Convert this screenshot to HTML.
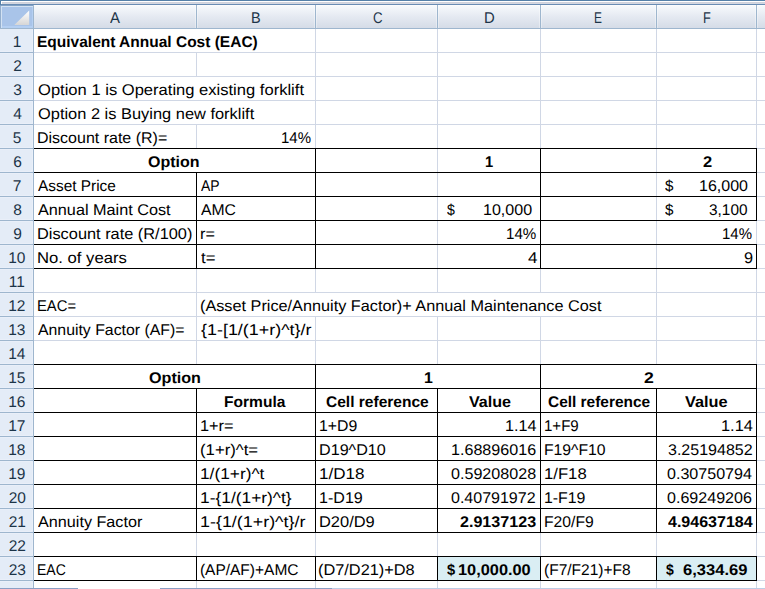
<!DOCTYPE html>
<html><head><meta charset="utf-8"><style>
html,body{margin:0;padding:0;}
body{width:765px;height:589px;position:relative;overflow:hidden;background:#fff;}
body>div{position:absolute;}
.t{font-family:"Liberation Sans",sans-serif;font-size:15.5px;line-height:30px;height:30px;white-space:nowrap;transform-origin:0 19px;text-rendering:geometricPrecision;}
.b{font-weight:700;}
</style></head><body>
<div style="left:0px;top:0px;width:765px;height:1px;background:#5480a8;"></div>
<div style="left:0px;top:1px;width:765px;height:1px;background:#ffffff;"></div>
<div style="left:0px;top:2px;width:765px;height:1px;background:#d0d2dc;"></div>
<div style="left:0px;top:3px;width:765px;height:1px;background:#d3d7e1;"></div>
<div style="left:0px;top:4px;width:765px;height:1px;background:#6a8db4;"></div>
<div style="left:34px;top:5px;width:731px;height:23px;background:linear-gradient(#ffffff 0px,#f6f9fc 1px,#e4e9f1 12px,#d5dce7 23px);"></div>
<div style="left:0px;top:28px;width:765px;height:1px;background:#9eb6ce;"></div>
<div style="left:195px;top:6px;width:1px;height:22px;background:rgba(255,255,255,0.35);"></div>
<div style="left:197px;top:6px;width:1px;height:22px;background:rgba(255,255,255,0.35);"></div>
<div style="left:196px;top:5px;width:1px;height:23px;background:#9eb6ce;"></div>
<div style="left:314px;top:6px;width:1px;height:22px;background:rgba(255,255,255,0.35);"></div>
<div style="left:316px;top:6px;width:1px;height:22px;background:rgba(255,255,255,0.35);"></div>
<div style="left:315px;top:5px;width:1px;height:23px;background:#9eb6ce;"></div>
<div style="left:436px;top:6px;width:1px;height:22px;background:rgba(255,255,255,0.35);"></div>
<div style="left:438px;top:6px;width:1px;height:22px;background:rgba(255,255,255,0.35);"></div>
<div style="left:437px;top:5px;width:1px;height:23px;background:#9eb6ce;"></div>
<div style="left:539px;top:6px;width:1px;height:22px;background:rgba(255,255,255,0.35);"></div>
<div style="left:541px;top:6px;width:1px;height:22px;background:rgba(255,255,255,0.35);"></div>
<div style="left:540px;top:5px;width:1px;height:23px;background:#9eb6ce;"></div>
<div style="left:655px;top:6px;width:1px;height:22px;background:rgba(255,255,255,0.35);"></div>
<div style="left:657px;top:6px;width:1px;height:22px;background:rgba(255,255,255,0.35);"></div>
<div style="left:656px;top:5px;width:1px;height:23px;background:#9eb6ce;"></div>
<div style="left:755px;top:6px;width:1px;height:22px;background:rgba(255,255,255,0.35);"></div>
<div style="left:757px;top:6px;width:1px;height:22px;background:rgba(255,255,255,0.35);"></div>
<div style="left:756px;top:5px;width:1px;height:23px;background:#9eb6ce;"></div>
<div style="left:33px;top:5px;width:1px;height:24px;background:#9eb6ce;"></div>
<div style="left:0px;top:0px;width:1px;height:5px;background:#5480a8;"></div>
<div style="left:1px;top:2px;width:1px;height:2px;background:#ffffff;"></div>
<div style="left:0px;top:5px;width:33px;height:23px;background:#94afce;"></div>
<div style="left:0px;top:5px;width:33px;height:1px;background:#7fa0c4;"></div>
<div style="left:1px;top:6px;width:32px;height:22px;background:#d3e2f3;"></div>
<div style="left:2px;top:7px;width:30px;height:19px;background:#a9c4e9;"></div>
<div style="left:32px;top:7px;width:1px;height:21px;background:#b4cff2;"></div>
<div style="left:2px;top:26px;width:31px;height:2px;background:#b4cff2;"></div>
<svg style="position:absolute;left:0;top:0" width="34" height="29"><defs><linearGradient id="tg" x1="0" y1="0" x2="0" y2="1"><stop offset="0" stop-color="#ffffff"/><stop offset="1" stop-color="#d6d6d6"/></linearGradient></defs><polygon points="14.3,25 29.2,25 29.2,10.5" fill="url(#tg)"/></svg>
<div style="left:0px;top:29px;width:33px;height:560px;background:#e4ecf7;"></div>
<div style="left:32px;top:29px;width:1px;height:560px;background:#eaf0f9;"></div>
<div style="left:33px;top:29px;width:1px;height:560px;background:#9eb6ce;"></div>
<div style="left:0px;top:51px;width:33px;height:1px;background:#e9eff9;"></div>
<div style="left:0px;top:52px;width:33px;height:1px;background:#9eb6ce;"></div>
<div style="left:0px;top:53px;width:33px;height:1px;background:#e9eff9;"></div>
<div style="left:0px;top:75px;width:33px;height:1px;background:#e9eff9;"></div>
<div style="left:0px;top:76px;width:33px;height:1px;background:#9eb6ce;"></div>
<div style="left:0px;top:77px;width:33px;height:1px;background:#e9eff9;"></div>
<div style="left:0px;top:99px;width:33px;height:1px;background:#e9eff9;"></div>
<div style="left:0px;top:100px;width:33px;height:1px;background:#9eb6ce;"></div>
<div style="left:0px;top:101px;width:33px;height:1px;background:#e9eff9;"></div>
<div style="left:0px;top:123px;width:33px;height:1px;background:#e9eff9;"></div>
<div style="left:0px;top:124px;width:33px;height:1px;background:#9eb6ce;"></div>
<div style="left:0px;top:125px;width:33px;height:1px;background:#e9eff9;"></div>
<div style="left:0px;top:147px;width:33px;height:1px;background:#e9eff9;"></div>
<div style="left:0px;top:148px;width:33px;height:1px;background:#9eb6ce;"></div>
<div style="left:0px;top:149px;width:33px;height:1px;background:#e9eff9;"></div>
<div style="left:0px;top:171px;width:33px;height:1px;background:#e9eff9;"></div>
<div style="left:0px;top:172px;width:33px;height:1px;background:#9eb6ce;"></div>
<div style="left:0px;top:173px;width:33px;height:1px;background:#e9eff9;"></div>
<div style="left:0px;top:195px;width:33px;height:1px;background:#e9eff9;"></div>
<div style="left:0px;top:196px;width:33px;height:1px;background:#9eb6ce;"></div>
<div style="left:0px;top:197px;width:33px;height:1px;background:#e9eff9;"></div>
<div style="left:0px;top:219px;width:33px;height:1px;background:#e9eff9;"></div>
<div style="left:0px;top:220px;width:33px;height:1px;background:#9eb6ce;"></div>
<div style="left:0px;top:221px;width:33px;height:1px;background:#e9eff9;"></div>
<div style="left:0px;top:243px;width:33px;height:1px;background:#e9eff9;"></div>
<div style="left:0px;top:244px;width:33px;height:1px;background:#9eb6ce;"></div>
<div style="left:0px;top:245px;width:33px;height:1px;background:#e9eff9;"></div>
<div style="left:0px;top:267px;width:33px;height:1px;background:#e9eff9;"></div>
<div style="left:0px;top:268px;width:33px;height:1px;background:#9eb6ce;"></div>
<div style="left:0px;top:269px;width:33px;height:1px;background:#e9eff9;"></div>
<div style="left:0px;top:291px;width:33px;height:1px;background:#e9eff9;"></div>
<div style="left:0px;top:292px;width:33px;height:1px;background:#9eb6ce;"></div>
<div style="left:0px;top:293px;width:33px;height:1px;background:#e9eff9;"></div>
<div style="left:0px;top:315px;width:33px;height:1px;background:#e9eff9;"></div>
<div style="left:0px;top:316px;width:33px;height:1px;background:#9eb6ce;"></div>
<div style="left:0px;top:317px;width:33px;height:1px;background:#e9eff9;"></div>
<div style="left:0px;top:339px;width:33px;height:1px;background:#e9eff9;"></div>
<div style="left:0px;top:340px;width:33px;height:1px;background:#9eb6ce;"></div>
<div style="left:0px;top:341px;width:33px;height:1px;background:#e9eff9;"></div>
<div style="left:0px;top:363px;width:33px;height:1px;background:#e9eff9;"></div>
<div style="left:0px;top:364px;width:33px;height:1px;background:#9eb6ce;"></div>
<div style="left:0px;top:365px;width:33px;height:1px;background:#e9eff9;"></div>
<div style="left:0px;top:387px;width:33px;height:1px;background:#e9eff9;"></div>
<div style="left:0px;top:388px;width:33px;height:1px;background:#9eb6ce;"></div>
<div style="left:0px;top:389px;width:33px;height:1px;background:#e9eff9;"></div>
<div style="left:0px;top:411px;width:33px;height:1px;background:#e9eff9;"></div>
<div style="left:0px;top:412px;width:33px;height:1px;background:#9eb6ce;"></div>
<div style="left:0px;top:413px;width:33px;height:1px;background:#e9eff9;"></div>
<div style="left:0px;top:435px;width:33px;height:1px;background:#e9eff9;"></div>
<div style="left:0px;top:436px;width:33px;height:1px;background:#9eb6ce;"></div>
<div style="left:0px;top:437px;width:33px;height:1px;background:#e9eff9;"></div>
<div style="left:0px;top:459px;width:33px;height:1px;background:#e9eff9;"></div>
<div style="left:0px;top:460px;width:33px;height:1px;background:#9eb6ce;"></div>
<div style="left:0px;top:461px;width:33px;height:1px;background:#e9eff9;"></div>
<div style="left:0px;top:483px;width:33px;height:1px;background:#e9eff9;"></div>
<div style="left:0px;top:484px;width:33px;height:1px;background:#9eb6ce;"></div>
<div style="left:0px;top:485px;width:33px;height:1px;background:#e9eff9;"></div>
<div style="left:0px;top:507px;width:33px;height:1px;background:#e9eff9;"></div>
<div style="left:0px;top:508px;width:33px;height:1px;background:#9eb6ce;"></div>
<div style="left:0px;top:509px;width:33px;height:1px;background:#e9eff9;"></div>
<div style="left:0px;top:531px;width:33px;height:1px;background:#e9eff9;"></div>
<div style="left:0px;top:532px;width:33px;height:1px;background:#9eb6ce;"></div>
<div style="left:0px;top:533px;width:33px;height:1px;background:#e9eff9;"></div>
<div style="left:0px;top:555px;width:33px;height:1px;background:#e9eff9;"></div>
<div style="left:0px;top:556px;width:33px;height:1px;background:#9eb6ce;"></div>
<div style="left:0px;top:557px;width:33px;height:1px;background:#e9eff9;"></div>
<div style="left:0px;top:579px;width:33px;height:1px;background:#e9eff9;"></div>
<div style="left:0px;top:580px;width:33px;height:1px;background:#9eb6ce;"></div>
<div style="left:0px;top:581px;width:33px;height:1px;background:#e9eff9;"></div>
<div style="left:34px;top:52px;width:731px;height:1px;background:#d0d7e5;"></div>
<div style="left:34px;top:76px;width:731px;height:1px;background:#d0d7e5;"></div>
<div style="left:34px;top:100px;width:731px;height:1px;background:#d0d7e5;"></div>
<div style="left:34px;top:124px;width:731px;height:1px;background:#d0d7e5;"></div>
<div style="left:34px;top:148px;width:731px;height:1px;background:#d0d7e5;"></div>
<div style="left:34px;top:172px;width:731px;height:1px;background:#d0d7e5;"></div>
<div style="left:34px;top:196px;width:731px;height:1px;background:#d0d7e5;"></div>
<div style="left:34px;top:220px;width:731px;height:1px;background:#d0d7e5;"></div>
<div style="left:34px;top:244px;width:731px;height:1px;background:#d0d7e5;"></div>
<div style="left:34px;top:268px;width:731px;height:1px;background:#d0d7e5;"></div>
<div style="left:34px;top:292px;width:731px;height:1px;background:#d0d7e5;"></div>
<div style="left:34px;top:316px;width:731px;height:1px;background:#d0d7e5;"></div>
<div style="left:34px;top:340px;width:731px;height:1px;background:#d0d7e5;"></div>
<div style="left:34px;top:364px;width:731px;height:1px;background:#d0d7e5;"></div>
<div style="left:34px;top:388px;width:731px;height:1px;background:#d0d7e5;"></div>
<div style="left:34px;top:412px;width:731px;height:1px;background:#d0d7e5;"></div>
<div style="left:34px;top:436px;width:731px;height:1px;background:#d0d7e5;"></div>
<div style="left:34px;top:460px;width:731px;height:1px;background:#d0d7e5;"></div>
<div style="left:34px;top:484px;width:731px;height:1px;background:#d0d7e5;"></div>
<div style="left:34px;top:508px;width:731px;height:1px;background:#d0d7e5;"></div>
<div style="left:34px;top:532px;width:731px;height:1px;background:#d0d7e5;"></div>
<div style="left:34px;top:556px;width:731px;height:1px;background:#d0d7e5;"></div>
<div style="left:34px;top:580px;width:731px;height:1px;background:#d0d7e5;"></div>
<div style="left:196px;top:53px;width:1px;height:23px;background:#d0d7e5;"></div>
<div style="left:196px;top:125px;width:1px;height:23px;background:#d0d7e5;"></div>
<div style="left:196px;top:173px;width:1px;height:23px;background:#d0d7e5;"></div>
<div style="left:196px;top:197px;width:1px;height:23px;background:#d0d7e5;"></div>
<div style="left:196px;top:221px;width:1px;height:23px;background:#d0d7e5;"></div>
<div style="left:196px;top:245px;width:1px;height:23px;background:#d0d7e5;"></div>
<div style="left:196px;top:269px;width:1px;height:23px;background:#d0d7e5;"></div>
<div style="left:196px;top:293px;width:1px;height:23px;background:#d0d7e5;"></div>
<div style="left:196px;top:317px;width:1px;height:23px;background:#d0d7e5;"></div>
<div style="left:196px;top:341px;width:1px;height:23px;background:#d0d7e5;"></div>
<div style="left:196px;top:389px;width:1px;height:23px;background:#d0d7e5;"></div>
<div style="left:196px;top:413px;width:1px;height:23px;background:#d0d7e5;"></div>
<div style="left:196px;top:437px;width:1px;height:23px;background:#d0d7e5;"></div>
<div style="left:196px;top:461px;width:1px;height:23px;background:#d0d7e5;"></div>
<div style="left:196px;top:485px;width:1px;height:23px;background:#d0d7e5;"></div>
<div style="left:196px;top:509px;width:1px;height:23px;background:#d0d7e5;"></div>
<div style="left:196px;top:533px;width:1px;height:23px;background:#d0d7e5;"></div>
<div style="left:196px;top:557px;width:1px;height:23px;background:#d0d7e5;"></div>
<div style="left:196px;top:581px;width:1px;height:23px;background:#d0d7e5;"></div>
<div style="left:315px;top:29px;width:1px;height:23px;background:#d0d7e5;"></div>
<div style="left:315px;top:53px;width:1px;height:23px;background:#d0d7e5;"></div>
<div style="left:315px;top:77px;width:1px;height:23px;background:#d0d7e5;"></div>
<div style="left:315px;top:101px;width:1px;height:23px;background:#d0d7e5;"></div>
<div style="left:315px;top:125px;width:1px;height:23px;background:#d0d7e5;"></div>
<div style="left:315px;top:149px;width:1px;height:23px;background:#d0d7e5;"></div>
<div style="left:315px;top:173px;width:1px;height:23px;background:#d0d7e5;"></div>
<div style="left:315px;top:197px;width:1px;height:23px;background:#d0d7e5;"></div>
<div style="left:315px;top:221px;width:1px;height:23px;background:#d0d7e5;"></div>
<div style="left:315px;top:245px;width:1px;height:23px;background:#d0d7e5;"></div>
<div style="left:315px;top:269px;width:1px;height:23px;background:#d0d7e5;"></div>
<div style="left:315px;top:317px;width:1px;height:23px;background:#d0d7e5;"></div>
<div style="left:315px;top:341px;width:1px;height:23px;background:#d0d7e5;"></div>
<div style="left:315px;top:365px;width:1px;height:23px;background:#d0d7e5;"></div>
<div style="left:315px;top:389px;width:1px;height:23px;background:#d0d7e5;"></div>
<div style="left:315px;top:413px;width:1px;height:23px;background:#d0d7e5;"></div>
<div style="left:315px;top:437px;width:1px;height:23px;background:#d0d7e5;"></div>
<div style="left:315px;top:461px;width:1px;height:23px;background:#d0d7e5;"></div>
<div style="left:315px;top:485px;width:1px;height:23px;background:#d0d7e5;"></div>
<div style="left:315px;top:509px;width:1px;height:23px;background:#d0d7e5;"></div>
<div style="left:315px;top:533px;width:1px;height:23px;background:#d0d7e5;"></div>
<div style="left:315px;top:557px;width:1px;height:23px;background:#d0d7e5;"></div>
<div style="left:315px;top:581px;width:1px;height:23px;background:#d0d7e5;"></div>
<div style="left:437px;top:29px;width:1px;height:23px;background:#d0d7e5;"></div>
<div style="left:437px;top:53px;width:1px;height:23px;background:#d0d7e5;"></div>
<div style="left:437px;top:77px;width:1px;height:23px;background:#d0d7e5;"></div>
<div style="left:437px;top:101px;width:1px;height:23px;background:#d0d7e5;"></div>
<div style="left:437px;top:125px;width:1px;height:23px;background:#d0d7e5;"></div>
<div style="left:437px;top:149px;width:1px;height:23px;background:#d0d7e5;"></div>
<div style="left:437px;top:173px;width:1px;height:23px;background:#d0d7e5;"></div>
<div style="left:437px;top:197px;width:1px;height:23px;background:#d0d7e5;"></div>
<div style="left:437px;top:221px;width:1px;height:23px;background:#d0d7e5;"></div>
<div style="left:437px;top:245px;width:1px;height:23px;background:#d0d7e5;"></div>
<div style="left:437px;top:269px;width:1px;height:23px;background:#d0d7e5;"></div>
<div style="left:437px;top:317px;width:1px;height:23px;background:#d0d7e5;"></div>
<div style="left:437px;top:341px;width:1px;height:23px;background:#d0d7e5;"></div>
<div style="left:437px;top:389px;width:1px;height:23px;background:#d0d7e5;"></div>
<div style="left:437px;top:413px;width:1px;height:23px;background:#d0d7e5;"></div>
<div style="left:437px;top:437px;width:1px;height:23px;background:#d0d7e5;"></div>
<div style="left:437px;top:461px;width:1px;height:23px;background:#d0d7e5;"></div>
<div style="left:437px;top:485px;width:1px;height:23px;background:#d0d7e5;"></div>
<div style="left:437px;top:509px;width:1px;height:23px;background:#d0d7e5;"></div>
<div style="left:437px;top:533px;width:1px;height:23px;background:#d0d7e5;"></div>
<div style="left:437px;top:557px;width:1px;height:23px;background:#d0d7e5;"></div>
<div style="left:437px;top:581px;width:1px;height:23px;background:#d0d7e5;"></div>
<div style="left:540px;top:29px;width:1px;height:23px;background:#d0d7e5;"></div>
<div style="left:540px;top:53px;width:1px;height:23px;background:#d0d7e5;"></div>
<div style="left:540px;top:77px;width:1px;height:23px;background:#d0d7e5;"></div>
<div style="left:540px;top:101px;width:1px;height:23px;background:#d0d7e5;"></div>
<div style="left:540px;top:125px;width:1px;height:23px;background:#d0d7e5;"></div>
<div style="left:540px;top:149px;width:1px;height:23px;background:#d0d7e5;"></div>
<div style="left:540px;top:173px;width:1px;height:23px;background:#d0d7e5;"></div>
<div style="left:540px;top:197px;width:1px;height:23px;background:#d0d7e5;"></div>
<div style="left:540px;top:221px;width:1px;height:23px;background:#d0d7e5;"></div>
<div style="left:540px;top:245px;width:1px;height:23px;background:#d0d7e5;"></div>
<div style="left:540px;top:269px;width:1px;height:23px;background:#d0d7e5;"></div>
<div style="left:540px;top:317px;width:1px;height:23px;background:#d0d7e5;"></div>
<div style="left:540px;top:341px;width:1px;height:23px;background:#d0d7e5;"></div>
<div style="left:540px;top:365px;width:1px;height:23px;background:#d0d7e5;"></div>
<div style="left:540px;top:389px;width:1px;height:23px;background:#d0d7e5;"></div>
<div style="left:540px;top:413px;width:1px;height:23px;background:#d0d7e5;"></div>
<div style="left:540px;top:437px;width:1px;height:23px;background:#d0d7e5;"></div>
<div style="left:540px;top:461px;width:1px;height:23px;background:#d0d7e5;"></div>
<div style="left:540px;top:485px;width:1px;height:23px;background:#d0d7e5;"></div>
<div style="left:540px;top:509px;width:1px;height:23px;background:#d0d7e5;"></div>
<div style="left:540px;top:533px;width:1px;height:23px;background:#d0d7e5;"></div>
<div style="left:540px;top:557px;width:1px;height:23px;background:#d0d7e5;"></div>
<div style="left:540px;top:581px;width:1px;height:23px;background:#d0d7e5;"></div>
<div style="left:656px;top:29px;width:1px;height:23px;background:#d0d7e5;"></div>
<div style="left:656px;top:53px;width:1px;height:23px;background:#d0d7e5;"></div>
<div style="left:656px;top:77px;width:1px;height:23px;background:#d0d7e5;"></div>
<div style="left:656px;top:101px;width:1px;height:23px;background:#d0d7e5;"></div>
<div style="left:656px;top:125px;width:1px;height:23px;background:#d0d7e5;"></div>
<div style="left:656px;top:149px;width:1px;height:23px;background:#d0d7e5;"></div>
<div style="left:656px;top:173px;width:1px;height:23px;background:#d0d7e5;"></div>
<div style="left:656px;top:197px;width:1px;height:23px;background:#d0d7e5;"></div>
<div style="left:656px;top:221px;width:1px;height:23px;background:#d0d7e5;"></div>
<div style="left:656px;top:245px;width:1px;height:23px;background:#d0d7e5;"></div>
<div style="left:656px;top:269px;width:1px;height:23px;background:#d0d7e5;"></div>
<div style="left:656px;top:293px;width:1px;height:23px;background:#d0d7e5;"></div>
<div style="left:656px;top:317px;width:1px;height:23px;background:#d0d7e5;"></div>
<div style="left:656px;top:341px;width:1px;height:23px;background:#d0d7e5;"></div>
<div style="left:656px;top:389px;width:1px;height:23px;background:#d0d7e5;"></div>
<div style="left:656px;top:413px;width:1px;height:23px;background:#d0d7e5;"></div>
<div style="left:656px;top:437px;width:1px;height:23px;background:#d0d7e5;"></div>
<div style="left:656px;top:461px;width:1px;height:23px;background:#d0d7e5;"></div>
<div style="left:656px;top:485px;width:1px;height:23px;background:#d0d7e5;"></div>
<div style="left:656px;top:509px;width:1px;height:23px;background:#d0d7e5;"></div>
<div style="left:656px;top:533px;width:1px;height:23px;background:#d0d7e5;"></div>
<div style="left:656px;top:557px;width:1px;height:23px;background:#d0d7e5;"></div>
<div style="left:656px;top:581px;width:1px;height:23px;background:#d0d7e5;"></div>
<div style="left:756px;top:29px;width:1px;height:23px;background:#d0d7e5;"></div>
<div style="left:756px;top:53px;width:1px;height:23px;background:#d0d7e5;"></div>
<div style="left:756px;top:77px;width:1px;height:23px;background:#d0d7e5;"></div>
<div style="left:756px;top:101px;width:1px;height:23px;background:#d0d7e5;"></div>
<div style="left:756px;top:125px;width:1px;height:23px;background:#d0d7e5;"></div>
<div style="left:756px;top:149px;width:1px;height:23px;background:#d0d7e5;"></div>
<div style="left:756px;top:173px;width:1px;height:23px;background:#d0d7e5;"></div>
<div style="left:756px;top:197px;width:1px;height:23px;background:#d0d7e5;"></div>
<div style="left:756px;top:221px;width:1px;height:23px;background:#d0d7e5;"></div>
<div style="left:756px;top:245px;width:1px;height:23px;background:#d0d7e5;"></div>
<div style="left:756px;top:269px;width:1px;height:23px;background:#d0d7e5;"></div>
<div style="left:756px;top:293px;width:1px;height:23px;background:#d0d7e5;"></div>
<div style="left:756px;top:317px;width:1px;height:23px;background:#d0d7e5;"></div>
<div style="left:756px;top:341px;width:1px;height:23px;background:#d0d7e5;"></div>
<div style="left:756px;top:365px;width:1px;height:23px;background:#d0d7e5;"></div>
<div style="left:756px;top:389px;width:1px;height:23px;background:#d0d7e5;"></div>
<div style="left:756px;top:413px;width:1px;height:23px;background:#d0d7e5;"></div>
<div style="left:756px;top:437px;width:1px;height:23px;background:#d0d7e5;"></div>
<div style="left:756px;top:461px;width:1px;height:23px;background:#d0d7e5;"></div>
<div style="left:756px;top:485px;width:1px;height:23px;background:#d0d7e5;"></div>
<div style="left:756px;top:509px;width:1px;height:23px;background:#d0d7e5;"></div>
<div style="left:756px;top:533px;width:1px;height:23px;background:#d0d7e5;"></div>
<div style="left:756px;top:557px;width:1px;height:23px;background:#d0d7e5;"></div>
<div style="left:756px;top:581px;width:1px;height:23px;background:#d0d7e5;"></div>
<div style="left:438px;top:557px;width:102px;height:23px;background:#daeef3;"></div>
<div style="left:657px;top:557px;width:99px;height:23px;background:#daeef3;"></div>
<div style="left:34px;top:148px;width:723px;height:1px;background:#000000;"></div>
<div style="left:34px;top:172px;width:723px;height:1px;background:#000000;"></div>
<div style="left:34px;top:196px;width:723px;height:1px;background:#000000;"></div>
<div style="left:34px;top:220px;width:723px;height:1px;background:#000000;"></div>
<div style="left:34px;top:244px;width:723px;height:1px;background:#000000;"></div>
<div style="left:34px;top:268px;width:723px;height:1px;background:#000000;"></div>
<div style="left:315px;top:148px;width:1px;height:25px;background:#000000;"></div>
<div style="left:540px;top:148px;width:1px;height:25px;background:#000000;"></div>
<div style="left:756px;top:148px;width:1px;height:25px;background:#000000;"></div>
<div style="left:196px;top:172px;width:1px;height:25px;background:#000000;"></div>
<div style="left:315px;top:172px;width:1px;height:25px;background:#000000;"></div>
<div style="left:540px;top:172px;width:1px;height:25px;background:#000000;"></div>
<div style="left:756px;top:172px;width:1px;height:25px;background:#000000;"></div>
<div style="left:196px;top:196px;width:1px;height:25px;background:#000000;"></div>
<div style="left:315px;top:196px;width:1px;height:25px;background:#000000;"></div>
<div style="left:540px;top:196px;width:1px;height:25px;background:#000000;"></div>
<div style="left:756px;top:196px;width:1px;height:25px;background:#000000;"></div>
<div style="left:196px;top:220px;width:1px;height:25px;background:#000000;"></div>
<div style="left:315px;top:220px;width:1px;height:25px;background:#000000;"></div>
<div style="left:540px;top:220px;width:1px;height:25px;background:#000000;"></div>
<div style="left:196px;top:244px;width:1px;height:25px;background:#000000;"></div>
<div style="left:315px;top:244px;width:1px;height:25px;background:#000000;"></div>
<div style="left:540px;top:244px;width:1px;height:25px;background:#000000;"></div>
<div style="left:756px;top:244px;width:1px;height:25px;background:#000000;"></div>
<div style="left:34px;top:364px;width:723px;height:1px;background:#000000;"></div>
<div style="left:34px;top:388px;width:723px;height:1px;background:#000000;"></div>
<div style="left:34px;top:412px;width:723px;height:1px;background:#000000;"></div>
<div style="left:34px;top:436px;width:723px;height:1px;background:#000000;"></div>
<div style="left:34px;top:460px;width:723px;height:1px;background:#000000;"></div>
<div style="left:34px;top:484px;width:723px;height:1px;background:#000000;"></div>
<div style="left:34px;top:508px;width:723px;height:1px;background:#000000;"></div>
<div style="left:34px;top:532px;width:723px;height:1px;background:#000000;"></div>
<div style="left:315px;top:364px;width:1px;height:25px;background:#000000;"></div>
<div style="left:540px;top:364px;width:1px;height:25px;background:#000000;"></div>
<div style="left:756px;top:364px;width:1px;height:25px;background:#000000;"></div>
<div style="left:196px;top:388px;width:1px;height:25px;background:#000000;"></div>
<div style="left:315px;top:388px;width:1px;height:25px;background:#000000;"></div>
<div style="left:437px;top:388px;width:1px;height:25px;background:#000000;"></div>
<div style="left:540px;top:388px;width:1px;height:25px;background:#000000;"></div>
<div style="left:656px;top:388px;width:1px;height:25px;background:#000000;"></div>
<div style="left:756px;top:388px;width:1px;height:25px;background:#000000;"></div>
<div style="left:196px;top:412px;width:1px;height:25px;background:#000000;"></div>
<div style="left:315px;top:412px;width:1px;height:25px;background:#000000;"></div>
<div style="left:437px;top:412px;width:1px;height:25px;background:#000000;"></div>
<div style="left:540px;top:412px;width:1px;height:25px;background:#000000;"></div>
<div style="left:656px;top:412px;width:1px;height:25px;background:#000000;"></div>
<div style="left:756px;top:412px;width:1px;height:25px;background:#000000;"></div>
<div style="left:196px;top:436px;width:1px;height:25px;background:#000000;"></div>
<div style="left:315px;top:436px;width:1px;height:25px;background:#000000;"></div>
<div style="left:437px;top:436px;width:1px;height:25px;background:#000000;"></div>
<div style="left:540px;top:436px;width:1px;height:25px;background:#000000;"></div>
<div style="left:656px;top:436px;width:1px;height:25px;background:#000000;"></div>
<div style="left:756px;top:436px;width:1px;height:25px;background:#000000;"></div>
<div style="left:196px;top:460px;width:1px;height:25px;background:#000000;"></div>
<div style="left:315px;top:460px;width:1px;height:25px;background:#000000;"></div>
<div style="left:437px;top:460px;width:1px;height:25px;background:#000000;"></div>
<div style="left:540px;top:460px;width:1px;height:25px;background:#000000;"></div>
<div style="left:656px;top:460px;width:1px;height:25px;background:#000000;"></div>
<div style="left:756px;top:460px;width:1px;height:25px;background:#000000;"></div>
<div style="left:196px;top:484px;width:1px;height:25px;background:#000000;"></div>
<div style="left:315px;top:484px;width:1px;height:25px;background:#000000;"></div>
<div style="left:437px;top:484px;width:1px;height:25px;background:#000000;"></div>
<div style="left:540px;top:484px;width:1px;height:25px;background:#000000;"></div>
<div style="left:656px;top:484px;width:1px;height:25px;background:#000000;"></div>
<div style="left:756px;top:484px;width:1px;height:25px;background:#000000;"></div>
<div style="left:196px;top:508px;width:1px;height:25px;background:#000000;"></div>
<div style="left:315px;top:508px;width:1px;height:25px;background:#000000;"></div>
<div style="left:437px;top:508px;width:1px;height:25px;background:#000000;"></div>
<div style="left:540px;top:508px;width:1px;height:25px;background:#000000;"></div>
<div style="left:656px;top:508px;width:1px;height:25px;background:#000000;"></div>
<div style="left:756px;top:508px;width:1px;height:25px;background:#000000;"></div>
<div style="left:34px;top:556px;width:723px;height:1px;background:#000000;"></div>
<div style="left:34px;top:580px;width:723px;height:1px;background:#000000;"></div>
<div style="left:196px;top:556px;width:1px;height:25px;background:#000000;"></div>
<div style="left:315px;top:556px;width:1px;height:25px;background:#000000;"></div>
<div style="left:437px;top:556px;width:1px;height:25px;background:#000000;"></div>
<div style="left:540px;top:556px;width:1px;height:25px;background:#000000;"></div>
<div style="left:656px;top:556px;width:1px;height:25px;background:#000000;"></div>
<div style="left:756px;top:556px;width:1px;height:25px;background:#000000;"></div>
<div style="left:0px;top:588px;width:78px;height:1px;background:#8a9fc5;"></div>
<div style="left:160px;top:588px;width:172px;height:1px;background:#8a9fc5;"></div>
<div style="left:332px;top:588px;width:433px;height:1px;background:#bccde6;"></div>
<div class="t" style="left:109.80px;top:4px;transform:scale(0.9636,1.0);color:#1c3448">A</div>
<div class="t" style="left:251.07px;top:4px;transform:scale(0.9333,1.0);color:#1c3448">B</div>
<div class="t" style="left:372.80px;top:4px;transform:scale(0.8545,1.0);color:#1c3448">C</div>
<div class="t" style="left:484.14px;top:4px;transform:scale(0.9600,1.0);color:#1c3448">D</div>
<div class="t" style="left:594.33px;top:4px;transform:scale(0.7667,1.0);color:#1c3448">E</div>
<div class="t" style="left:703.38px;top:4px;transform:scale(0.8250,1.0);color:#1c3448">F</div>
<div class="t" style="left:12.70px;top:28px;transform:scale(1.0000,1.0);color:#1c3448">1</div>
<div class="t" style="left:13.20px;top:52px;transform:scale(1.0000,1.0);color:#1c3448">2</div>
<div class="t" style="left:13.20px;top:76px;transform:scale(1.0000,1.0);color:#1c3448">3</div>
<div class="t" style="left:13.20px;top:100px;transform:scale(1.0000,1.0);color:#1c3448">4</div>
<div class="t" style="left:12.70px;top:124px;transform:scale(1.0000,1.0);color:#1c3448">5</div>
<div class="t" style="left:13.20px;top:148px;transform:scale(1.0000,1.0);color:#1c3448">6</div>
<div class="t" style="left:12.70px;top:172px;transform:scale(1.0000,1.0);color:#1c3448">7</div>
<div class="t" style="left:13.20px;top:196px;transform:scale(1.0000,1.0);color:#1c3448">8</div>
<div class="t" style="left:13.20px;top:220px;transform:scale(1.0000,1.0);color:#1c3448">9</div>
<div class="t" style="left:8.20px;top:244px;transform:scale(1.0000,1.0);color:#1c3448">10</div>
<div class="t" style="left:8.70px;top:268px;transform:scale(1.0000,1.0);color:#1c3448">11</div>
<div class="t" style="left:8.20px;top:292px;transform:scale(1.0000,1.0);color:#1c3448">12</div>
<div class="t" style="left:8.20px;top:316px;transform:scale(1.0000,1.0);color:#1c3448">13</div>
<div class="t" style="left:8.20px;top:340px;transform:scale(1.0000,1.0);color:#1c3448">14</div>
<div class="t" style="left:8.20px;top:364px;transform:scale(1.0000,1.0);color:#1c3448">15</div>
<div class="t" style="left:8.20px;top:388px;transform:scale(1.0000,1.0);color:#1c3448">16</div>
<div class="t" style="left:8.20px;top:412px;transform:scale(1.0000,1.0);color:#1c3448">17</div>
<div class="t" style="left:8.20px;top:436px;transform:scale(1.0000,1.0);color:#1c3448">18</div>
<div class="t" style="left:8.20px;top:460px;transform:scale(1.0000,1.0);color:#1c3448">19</div>
<div class="t" style="left:8.70px;top:484px;transform:scale(1.0000,1.0);color:#1c3448">20</div>
<div class="t" style="left:8.70px;top:508px;transform:scale(1.0000,1.0);color:#1c3448">21</div>
<div class="t" style="left:8.70px;top:532px;transform:scale(1.0000,1.0);color:#1c3448">22</div>
<div class="t" style="left:8.70px;top:556px;transform:scale(1.0000,1.0);color:#1c3448">23</div>
<div class="t b" style="left:37.00px;top:28px;transform:scale(1.0000,1.0);color:#000">Equivalent Annual Cost (EAC)</div>
<div class="t" style="left:38.00px;top:76px;transform:scale(1.0683,1.0);color:#000">Option 1 is Operating existing forklift</div>
<div class="t" style="left:38.00px;top:100px;transform:scale(1.0588,1.0);color:#000">Option 2 is Buying new forklift</div>
<div class="t" style="left:36.97px;top:124px;transform:scale(1.0320,1.0);color:#000">Discount rate (R)=</div>
<div class="t" style="left:281.03px;top:124px;transform:scale(0.9667,1.0);color:#000">14%</div>
<div class="t b" style="left:147.60px;top:148px;transform:scale(1.0327,1.0);color:#000">Option</div>
<div class="t b" style="left:484.65px;top:148px;transform:scale(0.9500,1.0);color:#000">1</div>
<div class="t b" style="left:702.50px;top:148px;transform:scale(1.0625,1.0);color:#000">2</div>
<div class="t" style="left:37.50px;top:172px;transform:scale(0.9936,1.0);color:#000">Asset Price</div>
<div class="t" style="left:200.50px;top:172px;transform:scale(0.9000,1.0);color:#000">AP</div>
<div class="t" style="left:665.20px;top:172px;transform:scale(0.9778,1.0);color:#000">$</div>
<div class="t" style="left:698.77px;top:172px;transform:scale(1.0326,1.0);color:#000">16,000</div>
<div class="t" style="left:37.50px;top:196px;transform:scale(1.0465,1.0);color:#000">Annual Maint Cost</div>
<div class="t" style="left:200.50px;top:196px;transform:scale(1.0147,1.0);color:#000">AMC</div>
<div class="t" style="left:446.50px;top:196px;transform:scale(0.9111,1.0);color:#000">$</div>
<div class="t" style="left:482.67px;top:196px;transform:scale(1.0348,1.0);color:#000">10,000</div>
<div class="t" style="left:665.20px;top:196px;transform:scale(0.9778,1.0);color:#000">$</div>
<div class="t" style="left:708.60px;top:196px;transform:scale(0.9923,1.0);color:#000">3,100</div>
<div class="t" style="left:36.95px;top:220px;transform:scale(1.0548,1.0);color:#000">Discount rate (R/100)</div>
<div class="t" style="left:199.95px;top:220px;transform:scale(1.0462,1.0);color:#000">r=</div>
<div class="t" style="left:505.92px;top:220px;transform:scale(0.9767,1.0);color:#000">14%</div>
<div class="t" style="left:721.83px;top:220px;transform:scale(0.9667,1.0);color:#000">14%</div>
<div class="t" style="left:36.92px;top:244px;transform:scale(1.0756,1.0);color:#000">No. of years</div>
<div class="t" style="left:200.50px;top:244px;transform:scale(1.0846,1.0);color:#000">t=</div>
<div class="t" style="left:528.00px;top:244px;transform:scale(1.1000,1.0);color:#000">4</div>
<div class="t" style="left:744.00px;top:244px;transform:scale(1.0500,1.0);color:#000">9</div>
<div class="t" style="left:36.85px;top:292px;transform:scale(0.9538,1.0);color:#000">EAC=</div>
<div class="t" style="left:199.55px;top:292px;transform:scale(1.0482,1.0);color:#000">(Asset Price/Annuity Factor)+ Annual Maintenance Cost</div>
<div class="t" style="left:38.00px;top:316px;transform:scale(1.0210,1.0);color:#000">Annuity Factor (AF)=</div>
<div class="t" style="left:200.60px;top:316px;transform:scale(1.1563,1.0);color:#000">{1-[1/(1+r)^t}/r</div>
<div class="t b" style="left:149.40px;top:364px;transform:scale(1.0408,1.0);color:#000">Option</div>
<div class="t b" style="left:423.68px;top:364px;transform:scale(1.0250,1.0);color:#000">1</div>
<div class="t b" style="left:643.80px;top:364px;transform:scale(1.1375,1.0);color:#000">2</div>
<div class="t b" style="left:224.30px;top:388px;transform:scale(1.0033,1.0);color:#000">Formula</div>
<div class="t b" style="left:325.50px;top:388px;transform:scale(1.0020,1.0);color:#000">Cell reference</div>
<div class="t b" style="left:468.90px;top:388px;transform:scale(1.0375,1.0);color:#000">Value</div>
<div class="t b" style="left:547.60px;top:388px;transform:scale(0.9961,1.0);color:#000">Cell reference</div>
<div class="t b" style="left:685.30px;top:388px;transform:scale(1.0525,1.0);color:#000">Value</div>
<div class="t" style="left:200.05px;top:412px;transform:scale(1.0533,1.0);color:#000">1+r=</div>
<div class="t" style="left:318.68px;top:412px;transform:scale(1.0194,1.0);color:#000">1+D9</div>
<div class="t" style="left:505.26px;top:412px;transform:scale(1.0414,1.0);color:#000">1.14</div>
<div class="t" style="left:543.73px;top:412px;transform:scale(0.9714,1.0);color:#000">1+F9</div>
<div class="t" style="left:720.74px;top:412px;transform:scale(1.0552,1.0);color:#000">1.14</div>
<div class="t" style="left:200.42px;top:436px;transform:scale(1.0808,1.0);color:#000">(1+r)^t=</div>
<div class="t" style="left:318.66px;top:436px;transform:scale(1.0413,1.0);color:#000">D19^D10</div>
<div class="t" style="left:451.26px;top:436px;transform:scale(1.0395,1.0);color:#000">1.68896016</div>
<div class="t" style="left:543.68px;top:436px;transform:scale(1.0153,1.0);color:#000">F19^F10</div>
<div class="t" style="left:667.60px;top:436px;transform:scale(1.0341,1.0);color:#000">3.25194852</div>
<div class="t" style="left:199.88px;top:460px;transform:scale(1.1158,1.0);color:#000">1/(1+r)^t</div>
<div class="t" style="left:318.90px;top:460px;transform:scale(1.1000,1.0);color:#000">1/D18</div>
<div class="t" style="left:451.30px;top:460px;transform:scale(1.0390,1.0);color:#000">0.59208028</div>
<div class="t" style="left:543.92px;top:460px;transform:scale(1.0763,1.0);color:#000">1/F18</div>
<div class="t" style="left:667.00px;top:460px;transform:scale(1.0366,1.0);color:#000">0.30750794</div>
<div class="t" style="left:199.88px;top:484px;transform:scale(1.1198,1.0);color:#000">1-{1/(1+r)^t}</div>
<div class="t" style="left:318.96px;top:484px;transform:scale(1.0366,1.0);color:#000">1-D19</div>
<div class="t" style="left:451.30px;top:484px;transform:scale(1.0329,1.0);color:#000">0.40791972</div>
<div class="t" style="left:543.98px;top:484px;transform:scale(1.0231,1.0);color:#000">1-F19</div>
<div class="t" style="left:667.00px;top:484px;transform:scale(1.0366,1.0);color:#000">0.69249206</div>
<div class="t" style="left:37.80px;top:508px;transform:scale(1.0440,1.0);color:#000">Annuity Factor</div>
<div class="t" style="left:199.85px;top:508px;transform:scale(1.1544,1.0);color:#000">1-{1/(1+r)^t}/r</div>
<div class="t" style="left:318.94px;top:508px;transform:scale(1.0608,1.0);color:#000">D20/D9</div>
<div class="t b" style="left:460.40px;top:508px;transform:scale(1.0384,1.0);color:#000">2.9137123</div>
<div class="t" style="left:543.99px;top:508px;transform:scale(1.0125,1.0);color:#000">F20/F9</div>
<div class="t b" style="left:667.60px;top:508px;transform:scale(1.0341,1.0);color:#000">4.94637184</div>
<div class="t" style="left:37.10px;top:556px;transform:scale(0.9032,1.0);color:#000">EAC</div>
<div class="t" style="left:199.90px;top:556px;transform:scale(1.0000,1.0);color:#000">(AP/AF)+AMC</div>
<div class="t" style="left:318.15px;top:556px;transform:scale(1.0533,1.0);color:#000">(D7/D21)+D8</div>
<div class="t b" style="left:447.00px;top:556px;transform:scale(0.9444,1.0);color:#000">$</div>
<div class="t b" style="left:457.85px;top:556px;transform:scale(1.0544,1.0);color:#000">10,000.00</div>
<div class="t" style="left:543.60px;top:556px;transform:scale(1.0012,1.0);color:#000">(F7/F21)+F8</div>
<div class="t b" style="left:665.80px;top:556px;transform:scale(0.9000,1.0);color:#000">$</div>
<div class="t b" style="left:682.90px;top:556px;transform:scale(1.0683,1.0);color:#000">6,334.69</div>
</body></html>
